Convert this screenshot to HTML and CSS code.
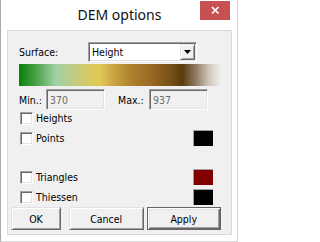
FILE: index.html
```html
<!DOCTYPE html>
<html>
<head>
<meta charset="utf-8">
<link rel="stylesheet" href="styles.css">
</head>
<body>
<div class="window">
  <div class="titlebar">
    <span class="title">DEM options</span>
    <div class="close">
      <svg width="30" height="19" viewBox="0 0 30 19"><path d="M12 6 L18.5 12.5 M18.5 6 L12 12.5" stroke="#fff" stroke-width="1.7" fill="none"/></svg>
    </div>
  </div>
  <div class="panel">
    <div class="row surface-row">
      <span class="label surface-label">Surface:</span>
      <div class="select">
        <span class="select-text">Height</span>
        <div class="drop-btn">
          <svg width="7" height="4" viewBox="0 0 7 4"><path d="M0 0 H7 L3.5 4 Z" fill="#000"/></svg>
        </div>
      </div>
    </div>
    <div class="gradient"></div>
    <div class="row minmax-row">
      <span class="label min-label">Min.:</span>
      <div class="field">370</div>
      <span class="label max-label">Max.:</span>
      <div class="field">937</div>
    </div>
    <div class="row check-row heights-row">
      <span class="checkbox"></span><span class="label">Heights</span>
    </div>
    <div class="row check-row points-row">
      <span class="checkbox"></span><span class="label">Points</span>
      <span class="swatch black"></span>
    </div>
    <div class="row check-row triangles-row">
      <span class="checkbox"></span><span class="label">Triangles</span>
      <span class="swatch maroon"></span>
    </div>
    <div class="row check-row thiessen-row">
      <span class="checkbox"></span><span class="label">Thiessen</span>
      <span class="swatch black"></span>
    </div>
    <div class="row buttons">
      <div class="btn ok">OK</div>
      <div class="btn cancel">Cancel</div>
      <div class="btn apply">Apply</div>
    </div>
  </div>
</div>
</body>
</html>
```
FILE: styles.css
```css
html, body {
  margin: 0;
  padding: 0;
  background: #fff;
}
.window {
  width: 238px;
  height: 242px;
  box-sizing: border-box;
  background: #fff;
  border-left: 1px solid #aaaaaa;
  border-right: 1px solid #d8d8d8;
  border-bottom: 1px solid #d8d8d8;
  position: relative;
  font-family: "DejaVu Sans Condensed", "DejaVu Sans", sans-serif;
  font-stretch: condensed;
  font-size: 10.5px;
  color: #000;
}
.titlebar {
  height: 30px;
  display: flex;
  justify-content: center;
  align-items: center;
}
.title {
  font-family: "Noto Sans", "Open Sans", sans-serif;
  font-stretch: normal;
  font-size: 14px;
  color: #111;
  margin-left: 1px;
  margin-top: -1px;
}
.close {
  position: absolute;
  left: 199px;
  top: 1px;
  width: 30px;
  height: 19px;
  background: #c75050;
  display: flex;
}
.panel {
  margin-left: 6px;
  width: 225px;
  height: 205px;
  box-sizing: border-box;
  border: 1px solid #d9d9d9;
  background: #f0f0f0;
  padding: 0 10px 0 11px;
  display: flex;
  flex-direction: column;
}
.row {
  display: flex;
  align-items: center;
}
.label {
  white-space: nowrap;
}
.surface-row {
  margin-top: 11px;
  height: 20px;
}
.surface-label {
  width: 69px;
}
.select {
  width: 109px;
  height: 20px;
  box-sizing: border-box;
  background: #fff;
  border: 1px solid;
  border-color: #a0a0a0 #fff #fff #a0a0a0;
  box-shadow: inset 1px 1px #696969, inset -1px -1px #e3e3e3;
  display: flex;
  align-items: center;
  padding: 2px 1px 2px 3px;
}
.select-text {
  flex: 1;
}
.drop-btn {
  width: 15px;
  height: 16px;
  box-sizing: border-box;
  background: #f0f0f0;
  border: 1px solid;
  border-color: #e3e3e3 #696969 #696969 #e3e3e3;
  box-shadow: inset 1px 1px #fff, inset -1px -1px #a0a0a0;
  display: flex;
  align-items: center;
  justify-content: center;
}
.gradient {
  margin-top: 2px;
  height: 22px;
  background: linear-gradient(to right,
    #078207 0%,
    #4ea44c 9%,
    #9fd1a6 18%,
    #bccc88 26%,
    #d6ca66 34%,
    #e2c955 40%,
    #c9a444 47%,
    #ae7f2c 56%,
    #976822 66%,
    #7b5418 74%,
    #5b3b0f 81%,
    #93806a 88%,
    #cfc6bb 94%,
    #f3f0ec 100%);
}
.minmax-row {
  margin-top: 3px;
  height: 21px;
}
.min-label {
  width: 27px;
}
.max-label {
  width: 31px;
  margin-left: 13px;
}
.field {
  width: 59px;
  height: 21px;
  box-sizing: border-box;
  background: #f0f0f0;
  border: 1px solid;
  border-color: #a0a0a0 #fff #fff #a0a0a0;
  box-shadow: inset 1px 1px #696969, inset -1px -1px #e3e3e3;
  color: #6d6d6d;
  padding-left: 3px;
  display: flex;
  align-items: center;
}
.check-row {
  height: 16px;
}
.heights-row {
  margin-top: 0;
}
.points-row {
  margin-top: 4px;
}
.triangles-row {
  margin-top: 23px;
}
.thiessen-row {
  margin-top: 4px;
}
.checkbox {
  width: 13px;
  height: 13px;
  box-sizing: border-box;
  margin-left: 1px;
  margin-right: 3px;
  background: #fff;
  border: 1px solid;
  border-color: #a0a0a0 #fff #fff #a0a0a0;
  box-shadow: inset 1px 1px #696969, inset -1px -1px #e3e3e3;
  flex: none;
}
.swatch {
  margin-left: auto;
  margin-right: 8px;
  width: 20px;
  height: 16px;
  box-sizing: border-box;
  border-top: 1px solid #a0a0a0;
  border-left: 1px solid #a0a0a0;
}
.swatch.black {
  background: #000;
}
.swatch.maroon {
  background: #800000;
}
.buttons {
  margin-top: 2px;
  margin-left: -8px;
  height: 23px;
}
.btn {
  height: 23px;
  box-sizing: border-box;
  background: #f0f0f0;
  border: 1px solid;
  border-color: #e3e3e3 #696969 #696969 #e3e3e3;
  box-shadow: inset 1px 1px #fff, inset -1px -1px #a0a0a0;
  display: flex;
  align-items: center;
  justify-content: center;
}
.ok {
  width: 51px;
}
.cancel {
  width: 76px;
  margin-left: 8px;
}
.apply {
  width: 76px;
  margin-left: 3px;
  border-color: #646464;
  box-shadow: inset 1px 1px #fff, inset -1px -1px #696969, inset 2px 2px #e3e3e3, inset -2px -2px #a0a0a0;
}
```
